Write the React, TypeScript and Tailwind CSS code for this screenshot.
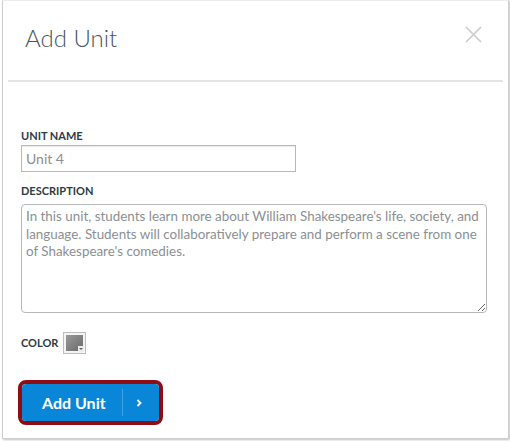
import React from "react";

const CloseIcon = () => (
  <svg width="17" height="17" viewBox="0 0 17 17" fill="none">
    <path d="M1 1 L16 16 M16 1 L1 16" stroke="#c9cbcd" strokeWidth="1.6" />
  </svg>
);

const Chevron = () => (
  <svg width="6" height="8" viewBox="0 0 6 8" fill="none">
    <path d="M1.5 1 L4.5 4 L1.5 7" stroke="white" strokeWidth="1.8" />
  </svg>
);

const ColorSwatch = () => (
  <div className="relative w-[23px] h-[22px] border border-[#bdbdbd] bg-[#f4f4f4] p-[2px]">
    <div className="w-full h-full bg-gradient-to-br from-[#9a9a9a] to-[#6a6a6a]" />
    <div className="absolute right-[1px] bottom-[1px] w-[6px] h-[6px] bg-[#ececec] flex items-center justify-center">
      <div className="w-0 h-0 border-l-[2px] border-r-[2px] border-t-[2px] border-l-transparent border-r-transparent border-t-[#666]" />
    </div>
  </div>
);

const App = () => {
  return (
    <div className="w-[510px] h-[441px] bg-white font-['Lato','Open_Sans',sans-serif]">
      <div className="ml-[2px] w-[507px] h-[439px] border border-[#cfcfcf] border-t-[#ececec] shadow-[1px_1px_2px_rgba(0,0,0,0.25)] bg-white flex flex-col">
        <div className="h-[79px] flex items-start justify-between pl-[22px] pr-[26px] pt-[22px]">
          <h1 className="text-[24px] font-light leading-[30px] text-[#4b5560]">Add Unit</h1>
          <button className="mt-[3px]">
            <CloseIcon />
          </button>
        </div>
        <div className="mx-[5px] h-[2px] bg-[#e4e4e4]" />

        <div className="pl-[18px] pr-[20px] pt-[46px] flex flex-col">
          <label className="text-[11px] font-bold leading-[16px] text-[#2d3b45] mb-[1px]">UNIT NAME</label>
          <input
            defaultValue="Unit 4"
            className="w-[275px] h-[27px] border border-[#b5b9bc] shadow-[inset_0_1px_1px_rgba(0,0,0,0.08)] px-[4px] text-[14px] text-[#8a8f94] outline-none"
          />

          <label className="mt-[11px] text-[11px] font-bold leading-[16px] text-[#2d3b45] mb-[5px]">DESCRIPTION</label>
          <textarea
            defaultValue="In this unit, students learn more about William Shakespeare's life, society, and language. Students will collaboratively prepare and perform a scene from one of Shakespeare's comedies."
            className="w-[466px] h-[109px] border border-[#b5b9bc] rounded-[4px] pt-[3px] px-[4px] text-[13.4px] leading-[17.5px] text-[#8a8f94] outline-none"
          />

          <div className="mt-[19px] flex items-center gap-[5px]">
            <span className="text-[11px] font-bold text-[#2d3b45]">COLOR</span>
            <ColorSwatch />
          </div>

          <div className="mt-[26px] ml-[-3px] self-start rounded-[8px] border-[4px] border-[#900b13]">
            <button className="h-[37px] w-[137px] rounded-[4px] bg-[#0a86d9] flex items-center text-white">
              <span className="pl-[20px] pr-[16px] text-[16px] font-bold leading-none">Add Unit</span>
              <span className="w-px h-[27px] bg-[#3da2e6]" />
              <span className="pl-[13px] flex items-center">
                <Chevron />
              </span>
            </button>
          </div>
        </div>
      </div>
    </div>
  );
};

export default App;
